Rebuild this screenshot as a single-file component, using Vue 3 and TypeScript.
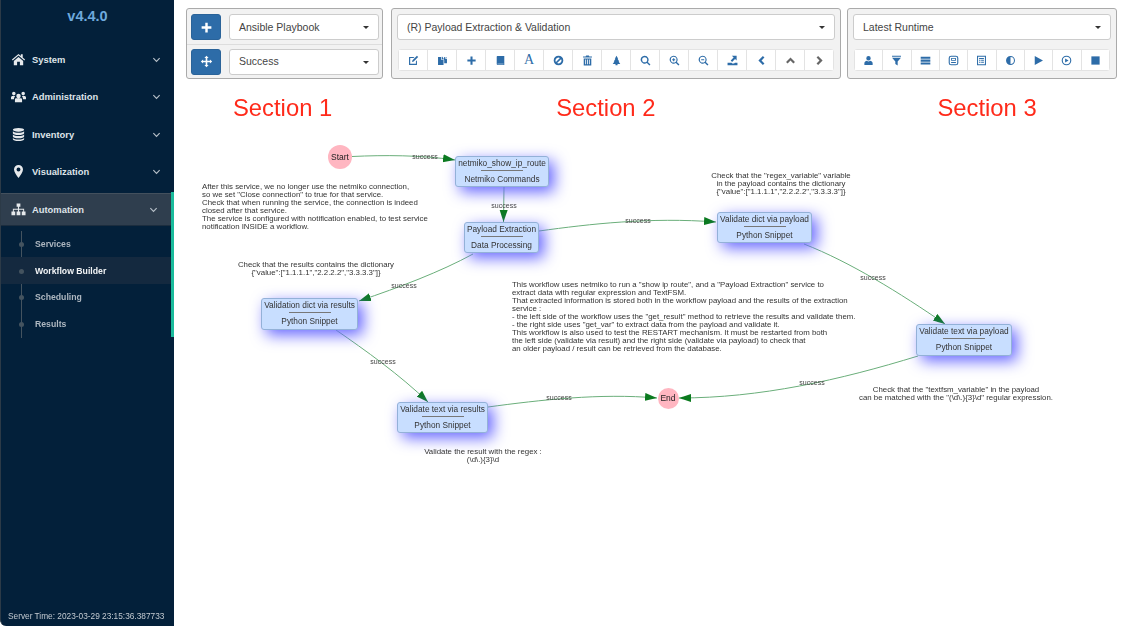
<template>
  <div class="page">
    <aside class="sidebar">
      <div class="version">v4.4.0</div>
      <nav class="menu">
        <div v-for="item in menu" :key="item.label" class="menu-item" :class="{ active: item.active }">
          <svg class="menu-icon" viewBox="0 0 16 16"><path :d="item.icon" fill-rule="evenodd" /></svg>
          <span class="menu-label">{{ item.label }}</span>
          <svg class="menu-chevron" viewBox="0 0 10 10"><path d="M1.500 3.500 5 7l3.500-3.500" /></svg>
        </div>
      </nav>
      <ul class="submenu">
        <li v-for="sub in submenu" :key="sub" :class="{ current: sub === 'Workflow Builder' }">
          <i class="dot"></i>{{ sub }}
        </li>
      </ul>
      <div class="server-time">Server Time: 2023-03-29 23:15:36.387733</div>
    </aside>

    <main class="main">
      <div class="toolbars">
        <section class="panel panel-one">
          <div class="add-row">
            <button class="square-btn">
              <svg viewBox="0 0 16 16"><path :d="icons.plus" /></svg>
            </button>
            <div class="select">Ansible Playbook<i class="caret"></i></div>
          </div>
          <div class="add-row second">
            <button class="square-btn">
              <svg viewBox="0 0 16 16"><path :d="icons.move" /></svg>
            </button>
            <div class="select">Success<i class="caret"></i></div>
          </div>
        </section>

        <section class="panel panel-two">
          <div class="select">(R) Payload Extraction &amp; Validation<i class="caret"></i></div>
          <div class="btn-group">
            <button v-for="b in editButtons" :key="b.name" class="tool-btn" :class="{ muted: b.muted }">
              <span v-if="b.name === 'font'" class="font-a">A</span>
              <svg v-else viewBox="0 0 16 16"><path :d="b.d" fill-rule="evenodd" /></svg>
            </button>
          </div>
        </section>

        <section class="panel panel-three">
          <div class="select">Latest Runtime<i class="caret"></i></div>
          <div class="btn-group">
            <button v-for="b in runButtons" :key="b.name" class="tool-btn">
              <svg viewBox="0 0 16 16"><path :d="b.d" fill-rule="evenodd" /></svg>
            </button>
          </div>
        </section>
      </div>

      <div class="headings">
        <h2 class="heading-one">Section 1</h2>
        <h2 class="heading-two">Section 2</h2>
        <h2 class="heading-three">Section 3</h2>
      </div>

      <!-- workflow canvas, coordinates below are page coordinates -->
      <div class="graph">
        <svg class="edges" :viewBox="`${OX} ${OY} 953 501`">
          <defs>
            <marker id="arrow" markerUnits="userSpaceOnUse" markerWidth="13" markerHeight="10" refX="12" refY="4" orient="auto">
              <path d="M0 0 12 4 0 8z" fill="#0b7a1f" />
            </marker>
          </defs>
          <path v-for="(e, i) in edges" :key="i" :d="e" class="edge" marker-end="url(#arrow)" />
        </svg>

        <span v-for="l in labels" :key="l.x" class="edge-label" :style="at(l.x, l.y)">success</span>

        <div v-for="c in circles" :key="c.label" class="circle" :style="circleStyle(c)">{{ c.label }}</div>

        <div v-for="n in nodes" :key="n.title" class="node" :style="nodeStyle(n)">
          <div class="node-title">{{ n.title }}</div>
          <div class="node-rule"></div>
          <div class="node-type">{{ n.type }}</div>
        </div>

        <div v-for="note in notes" :key="note.lines[0]" class="note" :class="{ centered: note.centered }" :style="at(note.x, note.y)">
          <div v-for="line in note.lines" :key="line">{{ line }}</div>
        </div>
      </div>
    </main>
  </div>
</template>

<script setup lang="ts">
interface GraphNode {
  title: string
  type: string
  x: number
  y: number
  w: number
  h: number
}

interface Note {
  x: number
  y: number
  centered?: boolean
  lines: string[]
}

const OX = 174
const OY = 125

const icons = {
  plus: 'M6.500 2h3v4.500H14v3H9.500V14h-3V9.500H2v-3h4.500z',
  move: 'M8 1l2.600 2.800H9v3.200h3.200V5.400L15 8l-2.800 2.600V9H9v3.200h1.600L8 15l-2.600-2.800H7V9H3.800v1.600L1 8l2.800-2.600V7H7V3.800H5.400z',
  home: 'M8 2 1 8l.8 1L8 3.800 14.200 9l.8-1-2.500-2.100V2.500h-2v1.700zM3 9.500 8 5.300l5 4.200V14H9.500v-3.500h-3V14H3z',
  users: 'M8 5a2.400 2.400 0 1 1 0 4.800A2.400 2.400 0 0 1 8 5zM3 3a1.900 1.900 0 1 1 0 3.800A1.900 1.900 0 0 1 3 3zM13 3a1.900 1.900 0 1 1 0 3.800A1.900 1.900 0 0 1 13 3zM0 11V9c0-1 .8-1.600 1.800-1.600h2.400L4 8.500c-.6.500-.8 1-.8 2.500zM16 11V9c0-1-.8-1.600-1.800-1.600h-2.400l.2 1.100c.6.500.8 1 .8 2.500zM4.200 14v-3c0-.8.700-1.200 1.500-1.200h4.600c.8 0 1.500.4 1.500 1.200v3z',
  database: 'M8 1c3.300 0 6 .8 6 2s-2.700 2-6 2-6-.8-6-2 2.700-2 6-2zM2 4.600C3 5.700 5.500 6.200 8 6.200s5-.5 6-1.600v2c0 1.100-2.700 2-6 2s-6-.9-6-2zM2 8.100c1 1.100 3.500 1.600 6 1.600s5-.5 6-1.600v2c0 1.100-2.700 2-6 2s-6-.9-6-2zM2 11.600c1 1.100 3.500 1.600 6 1.600s5-.5 6-1.600V13c0 1.100-2.700 2-6 2s-6-.9-6-2z',
  marker: 'M8 1a4.800 4.800 0 0 1 4.800 4.800c0 2.700-2.800 6.300-4.800 9.200-2-2.900-4.800-6.500-4.800-9.200A4.800 4.800 0 0 1 8 1zm0 2.700a2.100 2.100 0 1 0 0 4.200 2.100 2.100 0 0 0 0-4.200z',
  sitemap: 'M6 1.500h4v3.500H8.600v2.200H14V10h1.500v4h-4v-4H13V8.300H8.600V10H10v4H6v-4h1.400V8.300H3V10h1.500v4h-4v-4H2V7.200h5.400V5H6z'
}

const menu = [
  { label: 'System', icon: icons.home },
  { label: 'Administration', icon: icons.users },
  { label: 'Inventory', icon: icons.database },
  { label: 'Visualization', icon: icons.marker },
  { label: 'Automation', icon: icons.sitemap, active: true }
]

const submenu = ['Services', 'Workflow Builder', 'Scheduling', 'Results']

const editButtons = [
  { name: 'edit', d: 'M1.500 3h8L8 4.500H3.200v8.300h8.300V9L13 7.500v7H1.500zM13 1.200l1.800 1.800-6.500 6.500-2.500.7.700-2.500z' },
  { name: 'copy', d: 'M1.500 3h4.500v4h3.500v7.500h-8zM7 2.500h.8L9.500 5v1H7zM10.500 3h1.500v2.500h2.500V12H10.500V7.500L10 6.500zM13 3l1.500 1.500H13z' },
  { name: 'add', d: icons.plus },
  { name: 'book', d: 'M3.500 1.500h10v13h-9.500A1.500 1.500 0 0 1 2.500 13V2.500a1 1 0 0 1 1-1zM3.600 13c0 .4.200.6.600.6H12.500v-.8H3.600z' },
  { name: 'font', d: '' },
  { name: 'ban', d: 'M8 1a7 7 0 1 1 0 14A7 7 0 0 1 8 1zM4.300 10l5.700-5.700A4.400 4.400 0 0 0 3.600 8c0 .7.200 1.400.7 2zM6 11.700A4.400 4.400 0 0 0 12.400 8c0-.7-.2-1.400-.7-2z' },
  { name: 'trash', d: 'M6 .8h4l.7 1.500H14.500v1.500h-13V2.300h3.800zM2.500 5h11v10.200h-11zM4.700 6.500v7h1.200v-7zM7.400 6.500v7h1.200v-7zM10.100 6.500v7h1.200v-7z' },
  { name: 'tree', d: 'M8 1l2.400 4.500H9.500l2.500 4h-1l2.500 3.500h-4v2h-3v-2h-4L5 9.500H4l2.500-4h-.9z' },
  { name: 'search', d: 'M6.800 1a5.800 5.800 0 0 1 4.600 9.200l3.800 3.700-1.500 1.500-3.700-3.800A5.800 5.800 0 1 1 6.800 1zm0 2.100a3.700 3.700 0 1 0 0 7.400 3.700 3.700 0 0 0 0-7.400z' },
  { name: 'zoom-in', d: 'M6.800 1a5.800 5.800 0 0 1 4.600 9.200l3.800 3.700-1.500 1.500-3.700-3.800A5.800 5.800 0 1 1 6.800 1zm0 1.700a4.100 4.100 0 1 0 0 8.200 4.100 4.100 0 0 0 0-8.200zM6 4.600h1.600V6H9v1.600H7.600V9H6V7.600H4.600V6H6z' },
  { name: 'zoom-out', d: 'M6.800 1a5.800 5.800 0 0 1 4.600 9.200l3.800 3.700-1.500 1.500-3.700-3.800A5.800 5.800 0 1 1 6.800 1zm0 1.700a4.100 4.100 0 1 0 0 8.200 4.100 4.100 0 0 0 0-8.200zM4.600 6H9v1.600H4.600z' },
  { name: 'import', d: 'M7 1h7v7l-2.300-2.300-4.300 4.300-2-2 4.300-4.300zM.8 11.200h5.700l1.200 1.300h2.600l1.200-1.300h3.700v3.800H.8z' },
  { name: 'left', d: 'M10 1.500l2.300 2.300L8 8l4.300 4.200L10 14.500 3.500 8z' },
  { name: 'up', d: 'M8 3.500l6.500 6.500-2.300 2.300L8 8l-4.200 4.300L1.500 10z', muted: true },
  { name: 'right', d: 'M6 1.500 12.500 8 6 14.500l-2.300-2.300L8 8 3.700 3.800z', muted: true }
]

const runButtons = [
  { name: 'user', d: 'M8 1.500a3.200 3.200 0 0 1 3.200 3.200c0 1.600-.7 3.300-3.200 3.300S4.800 6.300 4.800 4.700A3.200 3.200 0 0 1 8 1.500zM2 14.500v-3c0-1.500 2-2.800 3.800-3.200.5.600 1.300 1 2.200 1s1.700-.4 2.200-1c1.800.4 3.800 1.700 3.800 3.200v3z' },
  { name: 'filter', d: 'M1.500 1h13v1.600h-13zM1.500 4h13L9.700 9.300v6l-3.400-2.200V9.300z' },
  { name: 'list', d: 'M1 2.500h14v3H1zM1 6.700h14v3H1zM1 10.900h14v3H1z' },
  { name: 'tasks', d: 'M4.500 1h7A3.500 3.500 0 0 1 15 4.500v7a3.500 3.500 0 0 1-3.500 3.500h-7A3.500 3.500 0 0 1 1 11.500v-7A3.500 3.500 0 0 1 4.500 1zm0 1.600a1.900 1.900 0 0 0-1.900 1.900v7c0 1 .9 1.900 1.900 1.900h7c1 0 1.900-.9 1.900-1.900v-7c0-1-.9-1.900-1.900-1.900zM4.500 4.200h7v4.300h-7zm1.300 1.200v1.900h4.400V5.400zM4.500 10h7v1.500h-7z' },
  { name: 'list-alt', d: 'M1.500 1h13v14h-13zM3 2.500v11h10v-11zM4.500 4.300h7v1.400h-7zM4.500 7h2v1.400h-2zM7.500 7h4v1.400h-4zM4.500 9.700h2v1.400h-2zM7.500 9.700h4v1.400h-4z' },
  { name: 'adjust', d: 'M8 1.500a6.500 6.500 0 1 1 0 13 6.500 6.500 0 0 1 0-13zM8 3v10a5 5 0 0 0 0-10z' },
  { name: 'play', d: 'M2.500 1.500 14.500 8l-12 6.500z' },
  { name: 'play-circle', d: 'M8 1a7 7 0 1 1 0 14A7 7 0 0 1 8 1zm0 1.600a5.400 5.400 0 1 0 0 10.800A5.400 5.400 0 0 0 8 2.600zM6 5l5 3-5 3z' },
  { name: 'stop', d: 'M2 2h12v12H2z' }
]

const nodes: GraphNode[] = [
  { title: 'netmiko_show_ip_route', type: 'Netmiko Commands', x: 455, y: 156, w: 94, h: 31 },
  { title: 'Payload Extraction', type: 'Data Processing', x: 464, y: 222, w: 75, h: 31 },
  { title: 'Validation dict via results', type: 'Python Snippet', x: 261, y: 298, w: 97, h: 32 },
  { title: 'Validate dict via payload', type: 'Python Snippet', x: 717, y: 212, w: 95, h: 31 },
  { title: 'Validate text via results', type: 'Python Snippet', x: 397, y: 402, w: 91, h: 31 },
  { title: 'Validate text via payload', type: 'Python Snippet', x: 916, y: 324, w: 96, h: 32 }
]

const circles = [
  { label: 'Start', x: 340, y: 157, r: 12 },
  { label: 'End', x: 668, y: 398, r: 10.5 }
]

const edges = [
  'M352 156.500C385 155 420 155 455 160',
  'M504 187 503.500 222',
  'M539 231C590 224 650 217 716 222',
  'M473 254C440 272 400 287 359 301',
  'M336 330C365 350 400 375 428 402',
  'M488 407C540 400 600 393 657 398',
  'M804 244C850 262 900 293 945 324',
  'M918 356C840 380 760 398 679 398'
]

const labels = [
  { x: 425, y: 156.500 },
  { x: 504, y: 205.500 },
  { x: 638, y: 220.500 },
  { x: 404, y: 286 },
  { x: 383, y: 361.500 },
  { x: 559, y: 397.500 },
  { x: 873, y: 277.500 },
  { x: 812, y: 383 }
]

const notes: Note[] = [
  {
    x: 202,
    y: 183,
    lines: [
      'After this service, we no longer use the netmiko connection,',
      'so we set "Close connection" to true for that service.',
      'Check that when running the service, the connection is indeed',
      'closed after that service.',
      'The service is configured with notification enabled, to test service',
      'notification INSIDE a workflow.'
    ]
  },
  {
    x: 316,
    y: 261,
    centered: true,
    lines: ['Check that the results contains the dictionary', '{"value":["1.1.1.1","2.2.2.2","3.3.3.3"]}']
  },
  {
    x: 781,
    y: 172,
    centered: true,
    lines: [
      'Check that the "regex_variable" variable',
      'in the payload contains the dictionary',
      '{"value":["1.1.1.1","2.2.2.2","3.3.3.3"]}'
    ]
  },
  {
    x: 512,
    y: 281,
    lines: [
      'This workflow uses netmiko to run a "show ip route", and a "Payload Extraction" service to',
      'extract data with regular expression and TextFSM.',
      'That extracted information is stored both in the workflow payload and the results of the extraction',
      'service :',
      '- the left side of the workflow uses the "get_result" method to retrieve the results and validate them.',
      '- the right side uses "get_var" to extract data from the payload and validate it.',
      'This workflow is also used to test the RESTART mechanism. It must be restarted from both',
      'the left side (validate via result) and the right side (validate via payload) to check that',
      'an older payload / result can be retrieved from the database.'
    ]
  },
  {
    x: 483,
    y: 448,
    centered: true,
    lines: ['Validate the result with the regex :', '(\\d\\.){3}\\d']
  },
  {
    x: 956,
    y: 386,
    centered: true,
    lines: ['Check that the "textfsm_variable" in the payload', 'can be matched with the "(\\d\\.){3}\\d" regular expression.']
  }
]

const at = (x: number, y: number) => ({ left: `${x - OX}px`, top: `${y - OY}px` })

const nodeStyle = (n: GraphNode) => ({
  ...at(n.x, n.y),
  width: `${n.w}px`,
  height: `${n.h}px`
})

const circleStyle = (c: { x: number; y: number; r: number }) => ({
  ...at(c.x - c.r, c.y - c.r),
  width: `${c.r * 2}px`,
  height: `${c.r * 2}px`
})
</script>

<style>
html,
body {
  margin: 0;
  background: #fff;
}
</style>

<style scoped>
.page {
  display: flex;
  width: 1127px;
  height: 626px;
  overflow: hidden;
  font-family: 'Liberation Sans', Arial, sans-serif;
  color: #333;
  /* the reference is a slightly soft capture */
  filter: blur(0.3px);
}

/* sidebar */
.sidebar {
  position: relative;
  flex: 0 0 174px;
  display: flex;
  flex-direction: column;
  background: #03203a;
  border-left: 1px solid #2c3a47;
  border-bottom-left-radius: 6px;
  box-sizing: border-box;
}

.version {
  height: 40.500px;
  padding-top: 8px;
  box-sizing: border-box;
  text-align: center;
  font-size: 14.500px;
  font-weight: 700;
  color: #6ea9dd;
}

.menu-item {
  display: flex;
  align-items: center;
  height: 37.500px;
  padding: 0 13px 0 10px;
  font-size: 9.400px;
  font-weight: 700;
  color: #dfe4e9;
}

.menu-item.active {
  height: 33px;
  margin-top: 2px;
  margin-right: 3px;
  padding-right: 13px;
  background: #2f3e4e;
  border-top: 1px solid #43505d;
  border-bottom: 1px solid #1c2d3e;
  box-sizing: border-box;
}

.menu-icon {
  width: 15px;
  height: 15px;
  margin-right: 6px;
  fill: #e6e9ec;
}

.menu-label {
  flex: 1;
}

.menu-chevron {
  width: 9px;
  height: 9px;
  fill: none;
  stroke: #b6bfc8;
  stroke-width: 1.300;
}

.submenu {
  position: relative;
  list-style: none;
  margin: 5px 3px 0 0;
  padding: 0;
  height: 107px;
  font-size: 8.700px;
  font-weight: 700;
  color: #aeb7c0;
}

.submenu::before {
  content: '';
  position: absolute;
  left: 20px;
  top: 0;
  bottom: 0;
  width: 1px;
  background: #44535f;
}

.submenu li {
  position: relative;
  display: flex;
  align-items: center;
  height: 26.700px;
  padding-left: 34px;
}

.submenu li.current {
  background: #14293f;
  color: #f2f4f6;
}

.dot {
  position: absolute;
  left: 18px;
  top: 50%;
  width: 5px;
  height: 5px;
  margin-top: -2px;
  border-radius: 50%;
  background: #44535f;
}

.sidebar::after {
  content: '';
  position: absolute;
  right: 0;
  top: 192px;
  width: 3px;
  height: 145px;
  background: #1abb9c;
}

.server-time {
  margin-top: auto;
  padding: 0 0 5px 7px;
  font-size: 8.300px;
  color: #c3cad1;
  white-space: nowrap;
}

/* toolbars */
.main {
  position: relative;
  flex: 1;
  display: flex;
  flex-direction: column;
  min-width: 0;
}

.toolbars {
  display: flex;
  padding: 8px 10px 0 12px;
  gap: 8px;
}

.panel {
  height: 71px;
  box-sizing: border-box;
  background: #f2f2f2;
  border: 1px solid #aaa;
  border-radius: 3px;
  display: flex;
  flex-direction: column;
  padding: 5px;
  gap: 9px;
}

.panel > .select {
  flex: none;
}

.panel-one {
  width: 197px;
  padding: 5px 3px 0 4px;
  gap: 0;
}

.panel-two {
  width: 450px;
}

.panel-three {
  width: 270px;
  margin-left: -2px;
}

.add-row {
  display: flex;
  align-items: flex-start;
  gap: 8px;
  height: 30px;
}

.add-row.second {
  border-top: 1px solid #ddd;
  margin: 0 -3px 0 -4px;
  padding: 4px 3px 0 4px;
}

.add-row.second .select {
  line-height: 23px;
}

.square-btn {
  flex: 0 0 30px;
  height: 26px;
  padding: 0;
  display: flex;
  align-items: center;
  justify-content: center;
  background: #2d6ca8;
  border: 1px solid #2a6399;
  border-radius: 3px;
}

.square-btn svg {
  width: 13px;
  height: 13px;
  fill: #fff;
}

.select {
  position: relative;
  flex: 1;
  height: 26px;
  line-height: 24px;
  box-sizing: border-box;
  padding-left: 9px;
  background: #fff;
  border: 1px solid #ccc;
  border-radius: 3px;
  font-size: 10.500px;
  color: #444;
}

.caret {
  position: absolute;
  right: 9px;
  top: 11px;
  border-top: 3.500px solid #333;
  border-left: 3.500px solid transparent;
  border-right: 3.500px solid transparent;
}

.btn-group {
  display: flex;
  height: 22px;
  margin: 0 1px;
  background: #fff;
  border: 1px solid #e3e3e3;
  border-radius: 3px;
  box-sizing: border-box;
}

.tool-btn {
  flex: 1;
  padding: 0;
  display: flex;
  align-items: center;
  justify-content: center;
  background: #fff;
  border: 0;
  border-right: 1px solid #e3e3e3;
}

.tool-btn:last-child {
  border-right: 0;
}

.tool-btn svg {
  width: 11px;
  height: 11px;
  fill: #2d6ca8;
}

.tool-btn.muted svg {
  fill: #666;
}

.font-a {
  font-family: 'Liberation Serif', serif;
  font-size: 14px;
  line-height: 1;
  color: #2d6ca8;
}

/* section titles */
.headings {
  height: 46px;
  display: flex;
}

.headings h2 {
  margin: 0;
  font-size: 23.800px;
  line-height: 28px;
  padding-top: 15px;
  font-weight: 400;
  color: #ff2a1a;
  white-space: nowrap;
}

.heading-one {
  margin-left: 59px !important;
}

.heading-two {
  margin-left: 224px !important;
}

.heading-three {
  margin-left: 282px !important;
}

/* workflow canvas */
.graph {
  position: relative;
  flex: 1;
}

.edges {
  position: absolute;
  left: 0;
  top: 0;
  width: 953px;
  height: 501px;
}

.edge {
  fill: none;
  stroke: #6aae7a;
  stroke-width: 1;
}

.edge-label {
  position: absolute;
  transform: translate(-50%, -50%);
  font-size: 7px;
  line-height: 8px;
  color: #444;
}

.circle {
  position: absolute;
  display: flex;
  align-items: center;
  justify-content: center;
  border-radius: 50%;
  background: #ffb6c1;
  font-size: 8.500px;
  color: #222;
}

.node {
  position: absolute;
  box-sizing: border-box;
  display: flex;
  flex-direction: column;
  align-items: center;
  padding-top: 1px;
  background: #c8deff;
  border: 1px solid #93b1d8;
  border-radius: 3px;
  box-shadow: 5px 5px 15px #6666ff;
  font-size: 8.300px;
  line-height: 10px;
  color: #333;
  white-space: nowrap;
}

.node-rule {
  width: 42px;
  height: 0;
  margin: 2px 0 3px;
  border-top: 1px solid #777;
}

.note {
  position: absolute;
  font-size: 7.850px;
  line-height: 8px;
  color: #333;
  white-space: nowrap;
}

.note.centered {
  transform: translateX(-50%);
  text-align: center;
}
</style>
